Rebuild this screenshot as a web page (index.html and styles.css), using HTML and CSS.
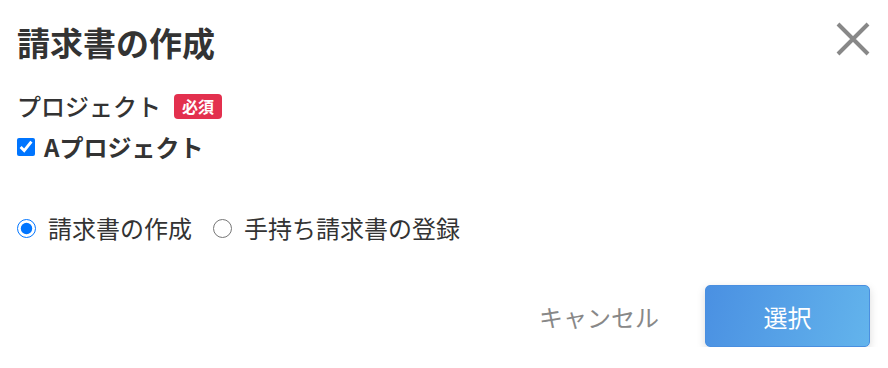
FILE: index.html
```html
<!DOCTYPE html>
<html lang="ja">
<head>
<meta charset="utf-8">
<title>請求書の作成</title>
<link rel="stylesheet" href="styles.css">
</head>
<body>
<div class="dialog">
  <div class="header">
    <h1 class="title">請求書の作成</h1>
    <button class="close" aria-label="閉じる">
      <svg width="34" height="34" viewBox="0 0 34 34"><path d="M2 2L32 32M32 2L2 32" stroke="#888" stroke-width="4" fill="none"/></svg>
    </button>
  </div>
  <div class="label-row">
    <span class="label">プロジェクト</span>
    <span class="badge">必須</span>
  </div>
  <label class="check-row">
    <input type="checkbox" class="check" checked>
    <span class="check-text">Aプロジェクト</span>
  </label>
  <div class="radio-row">
    <label class="radio-item"><input type="radio" name="mode" class="radio" checked><span>請求書の作成</span></label>
    <label class="radio-item"><input type="radio" name="mode" class="radio"><span>手持ち請求書の登録</span></label>
  </div>
  <div class="footer">
    <button class="cancel">キャンセル</button>
    <button class="primary">選択</button>
  </div>
</div>
</body>
</html>
```
FILE: styles.css
```css
html, body {
  margin: 0;
  padding: 0;
  background: #fff;
}
body {
  font-family: "Noto Sans CJK JP", "Noto Sans", sans-serif;
  color: #333;
}
.dialog {
  padding: 0 18px 0 17px;
}
.header {
  height: 84px;
  display: flex;
  align-items: center;
  justify-content: space-between;
}
.title {
  margin: 0;
  font-size: 33px;
  font-weight: 700;
  line-height: 1;
  color: #333;
}
.close {
  border: 0;
  background: none;
  padding: 0;
  margin-top: -6px;
  width: 34px;
  height: 34px;
  display: flex;
}
.label-row {
  height: 44px;
  display: flex;
  align-items: center;
  gap: 13px;
}
.label {
  font-size: 24px;
  font-weight: 500;
  line-height: 1;
}
.badge {
  background: #e3304e;
  color: #fff;
  font-size: 16px;
  font-weight: 700;
  line-height: 25px;
  height: 25px;
  padding: 0 8px;
  border-radius: 4px;
}
.check-row {
  height: 38px;
  display: flex;
  align-items: center;
  gap: 9px;
}
.check {
  margin: 0;
  width: 18px;
  height: 18px;
  accent-color: #0075ff;
}
.check-text {
  font-size: 24px;
  font-weight: 700;
  line-height: 1;
}
.radio-row {
  margin-top: 43px;
  height: 38px;
  display: flex;
  align-items: center;
  gap: 21px;
}
.radio-item {
  display: flex;
  align-items: center;
  gap: 12px;
  font-size: 24px;
  line-height: 1;
  font-weight: 400;
}
.radio {
  margin: 0;
  width: 19px;
  height: 19px;
  accent-color: #0075ff;
}
.footer {
  margin-top: 38px;
  display: flex;
  justify-content: flex-end;
  align-items: center;
  gap: 46px;
}
.cancel {
  border: 0;
  background: none;
  padding: 0;
  font-family: inherit;
  font-size: 24px;
  color: #888;
}
.primary {
  width: 165px;
  height: 62px;
  border: 1px solid #4a8fe0;
  border-radius: 5px;
  background: linear-gradient(105deg, #4a90e2 0%, #63b4ec 100%);
  color: #fff;
  font-family: inherit;
  font-size: 24px;
  box-shadow: 0 3px 8px rgba(0, 0, 0, 0.15);
}
```
